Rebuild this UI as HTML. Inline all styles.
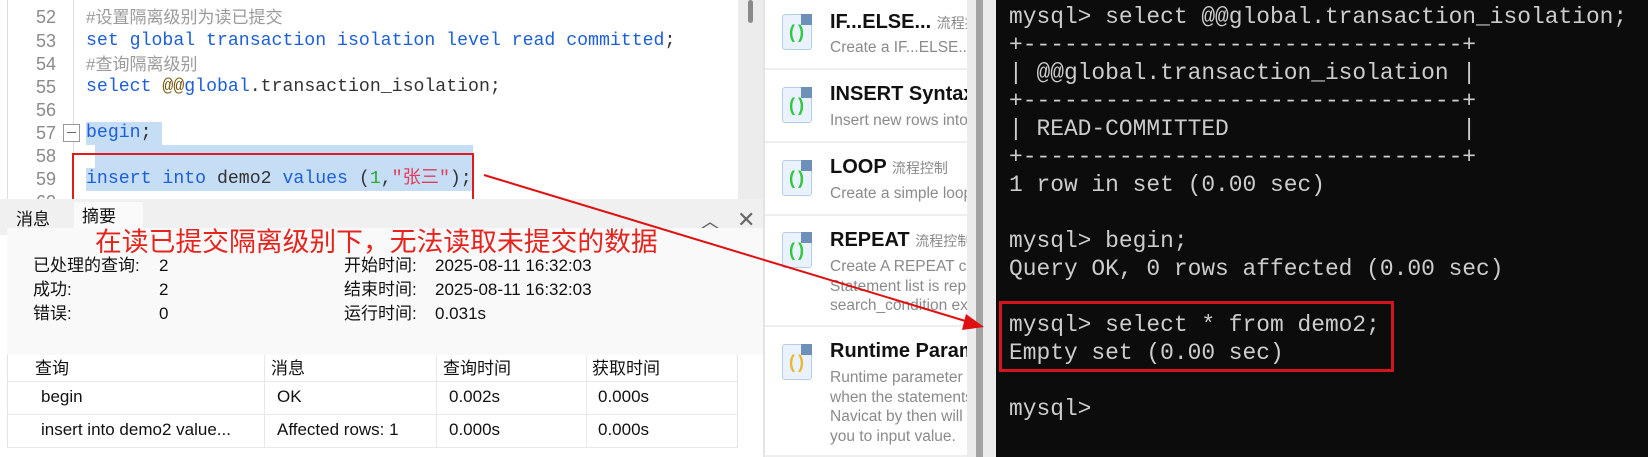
<!DOCTYPE html>
<html><head><meta charset="utf-8"><style>
*{margin:0;padding:0;box-sizing:border-box}
body{width:1648px;height:457px;overflow:hidden;position:relative;background:#fff;font-family:"Liberation Sans","Noto Sans CJK SC",sans-serif}
.a{position:absolute;white-space:nowrap}
.ln{position:absolute;width:56px;text-align:right;left:0;font-size:18px;color:#8a8a8a;line-height:23px;font-family:"Liberation Sans",sans-serif}
.cd{position:absolute;left:86px;font-family:"Liberation Mono","Noto Sans CJK SC",monospace;font-size:18.2px;line-height:23px;color:#333}
.k{color:#1d5fd8}.c{color:#9a9a9a;font-family:"Liberation Sans","Noto Sans CJK SC",sans-serif;font-size:17px}
.s{font-size:17px;color:#111;line-height:24px}
.t{font-family:"Liberation Mono",monospace;font-size:22.9px;color:#cccccc;line-height:28px;position:absolute;left:1009px;white-space:pre}
.ico{position:absolute;left:782px;width:30px;height:36px;background:#eaf3fd;border:1px solid #b5cde6;border-radius:3px}
.ico:after{content:"";position:absolute;right:-1px;top:-1px;border-style:solid;border-width:0 11px 11px 0;border-color:#fff #6d8fb8 #6d8fb8 #fff}
.ico span{position:absolute;left:6px;top:7px;font:bold 18px "Liberation Sans",sans-serif;color:#2ec93e;letter-spacing:3px}
.ti{position:absolute;left:830px;font-size:20px;font-weight:bold;color:#111;line-height:26px;white-space:nowrap}
.ti small{font-size:14px;color:#888;font-weight:normal}
.de{position:absolute;left:830px;font-size:15.5px;color:#8a8a8a;line-height:19.5px;white-space:nowrap}
.sep{position:absolute;left:765px;width:202px;height:2px;background:#eeeeee}
</style></head><body>
<div class="a" style="left:7px;top:0;width:1px;height:200px;background:#ddd"></div>
<div class="a" style="left:73px;top:0;width:1px;height:200px;background:#ddd"></div>
<div class="a" style="left:86px;top:122px;width:76px;height:23px;background:#c6ddf6"></div>
<div class="a" style="left:95px;top:145px;width:378px;height:23px;background:#c6ddf6"></div>
<div class="a" style="left:86px;top:168px;width:387px;height:23px;background:#c6ddf6"></div>
<div class="a" style="left:63px;top:124px;width:17px;height:18px;border:1px solid #999;background:#fff"></div>
<div class="a" style="left:67px;top:132px;width:9px;height:1px;background:#666"></div>
<div class="ln" style="top:6px">52</div><div class="cd c" style="top:6px">#设置隔离级别为读已提交</div>
<div class="ln" style="top:30px">53</div><div class="cd k" style="top:30px">set global transaction isolation level read committed<span style="color:#333">;</span></div>
<div class="ln" style="top:53px">54</div><div class="cd c" style="top:53px">#查询隔离级别</div>
<div class="ln" style="top:76px">55</div><div class="cd" style="top:76px"><span class="k">select</span> <span style="color:#7a5a10">@@</span><span class="k">global</span>.transaction_isolation;</div>
<div class="ln" style="top:99px">56</div>
<div class="ln" style="top:122px">57</div><div class="cd k" style="top:122px">begin<span style="color:#333">;</span></div>
<div class="ln" style="top:145px">58</div>
<div class="ln" style="top:168px">59</div><div class="cd" style="top:168px"><span class="k">insert into</span> demo2 <span class="k">values</span> (<span style="color:#22aa33">1</span>,<span style="color:#e23c5a">"张三"</span>);</div>
<div class="ln" style="top:191px">60</div>
<div class="a" style="left:72px;top:153px;width:402px;height:52px;border:2px solid #e01b1b"></div>
<div class="a" style="left:738px;top:0;width:25px;height:200px;background:#ececec"></div>
<div class="a" style="left:748px;top:0;width:5px;height:23px;background:#8a8a8a;border-radius:3px"></div>
<div class="a" style="left:0;top:199px;width:765px;height:36px;background:#f0f0f0"></div>
<div class="a" style="left:74px;top:202px;width:69px;height:33px;background:#fafafa"></div>
<div class="a s" style="left:16px;top:208px">消息</div>
<div class="a s" style="left:82px;top:205px">摘要</div>
<div class="a" style="left:700px;top:205px;font-size:20px;color:#666">︿</div>
<div class="a" style="left:737px;top:207px;font-size:22px;color:#666">✕</div>
<div class="a" style="left:7px;top:228px;width:758px;height:127px;background:#f9f9f9"></div>
<div class="a" style="left:95px;top:227px;font-size:26.8px;color:#e5241e;line-height:30px">在读已提交隔离级别下，无法读取未提交的数据</div>
<div class="a s" style="left:33px;top:254px">已处理的查询:</div><div class="a s" style="left:159px;top:254px">2</div>
<div class="a s" style="left:33px;top:278px">成功:</div><div class="a s" style="left:159px;top:278px">2</div>
<div class="a s" style="left:33px;top:302px">错误:</div><div class="a s" style="left:159px;top:302px">0</div>
<div class="a s" style="left:344px;top:254px">开始时间:</div><div class="a s" style="left:435px;top:254px">2025-08-11 16:32:03</div>
<div class="a s" style="left:344px;top:278px">结束时间:</div><div class="a s" style="left:435px;top:278px">2025-08-11 16:32:03</div>
<div class="a s" style="left:344px;top:302px">运行时间:</div><div class="a s" style="left:435px;top:302px">0.031s</div>
<div class="a" style="left:7px;top:355px;width:731px;height:93px;border-left:1px solid #e4e4e4;border-right:1px solid #e4e4e4"></div>
<div class="a" style="left:7px;top:381px;width:731px;height:1px;background:#e8e8e8"></div>
<div class="a" style="left:7px;top:414px;width:731px;height:1px;background:#e8e8e8"></div>
<div class="a" style="left:7px;top:447px;width:731px;height:1px;background:#e8e8e8"></div>
<div class="a" style="left:264px;top:355px;width:1px;height:93px;background:#e8e8e8"></div>
<div class="a" style="left:436px;top:355px;width:1px;height:93px;background:#e8e8e8"></div>
<div class="a" style="left:586px;top:355px;width:1px;height:93px;background:#e8e8e8"></div>
<div class="a s" style="left:35px;top:357px">查询</div><div class="a s" style="left:271px;top:357px">消息</div><div class="a s" style="left:443px;top:357px">查询时间</div><div class="a s" style="left:592px;top:357px">获取时间</div>
<div class="a s" style="left:41px;top:385px">begin</div><div class="a s" style="left:277px;top:385px">OK</div><div class="a s" style="left:449px;top:385px">0.002s</div><div class="a s" style="left:598px;top:385px">0.000s</div>
<div class="a s" style="left:41px;top:418px">insert into demo2 value...</div><div class="a s" style="left:277px;top:418px">Affected rows: 1</div><div class="a s" style="left:449px;top:418px">0.000s</div><div class="a s" style="left:598px;top:418px">0.000s</div>
<div class="a" style="left:763px;top:0;width:2px;height:457px;background:#e4e4e4"></div>
<div class="ico" style="top:14px"><span>()</span></div>
<div class="ti" style="top:9px">IF...ELSE... <small>流程控制</small></div>
<div class="de" style="top:38px">Create a IF...ELSE... construct</div>
<div class="sep" style="top:68px"></div>
<div class="ico" style="top:87px"><span>()</span></div>
<div class="ti" style="top:81px">INSERT Syntax</div>
<div class="de" style="top:111px">Insert new rows into a table</div>
<div class="sep" style="top:141px"></div>
<div class="ico" style="top:160px"><span>()</span></div>
<div class="ti" style="top:154px">LOOP <small>流程控制</small></div>
<div class="de" style="top:184px">Create a simple loop construct</div>
<div class="sep" style="top:214px"></div>
<div class="ico" style="top:232px"><span>()</span></div>
<div class="ti" style="top:227px">REPEAT <small>流程控制</small></div>
<div class="de" style="top:257px">Create A REPEAT construct.<br>Statement list is repeated<br>search_condition expression</div>
<div class="sep" style="top:325px"></div>
<div class="ico" style="top:344px"><span style="color:#e8b830">()</span></div>
<div class="ti" style="top:338px">Runtime Parameter</div>
<div class="de" style="top:368px">Runtime parameter to prompt<br>when the statements are run.<br>Navicat by then will prompt<br>you to input value.</div>
<div class="sep" style="top:455px"></div>
<div class="a" style="left:967px;top:0;width:29px;height:457px;background:#ececec"></div>
<div class="a" style="left:976px;top:0;width:7px;height:457px;background:#a3a3a3"></div>
<div class="a" style="left:996px;top:0;width:652px;height:457px;background:#0c0c0c"></div>
<div class="t" style="top:3px">mysql&gt; select @@global.transaction_isolation;
+--------------------------------+
| @@global.transaction_isolation |
+--------------------------------+
| READ-COMMITTED                 |
+--------------------------------+
1 row in set (0.00 sec)

mysql&gt; begin;
Query OK, 0 rows affected (0.00 sec)

mysql&gt; select * from demo2;
Empty set (0.00 sec)

mysql&gt;</div>
<div class="a" style="left:999px;top:301px;width:395px;height:71px;border:3px solid #d4141c"></div>
<svg class="a" style="left:0;top:0" width="1648" height="457"><line x1="484" y1="175" x2="972" y2="323" stroke="#e01010" stroke-width="2"/><polygon points="984,327 966,314 962,330" fill="#e01010"/></svg>
</body></html>
